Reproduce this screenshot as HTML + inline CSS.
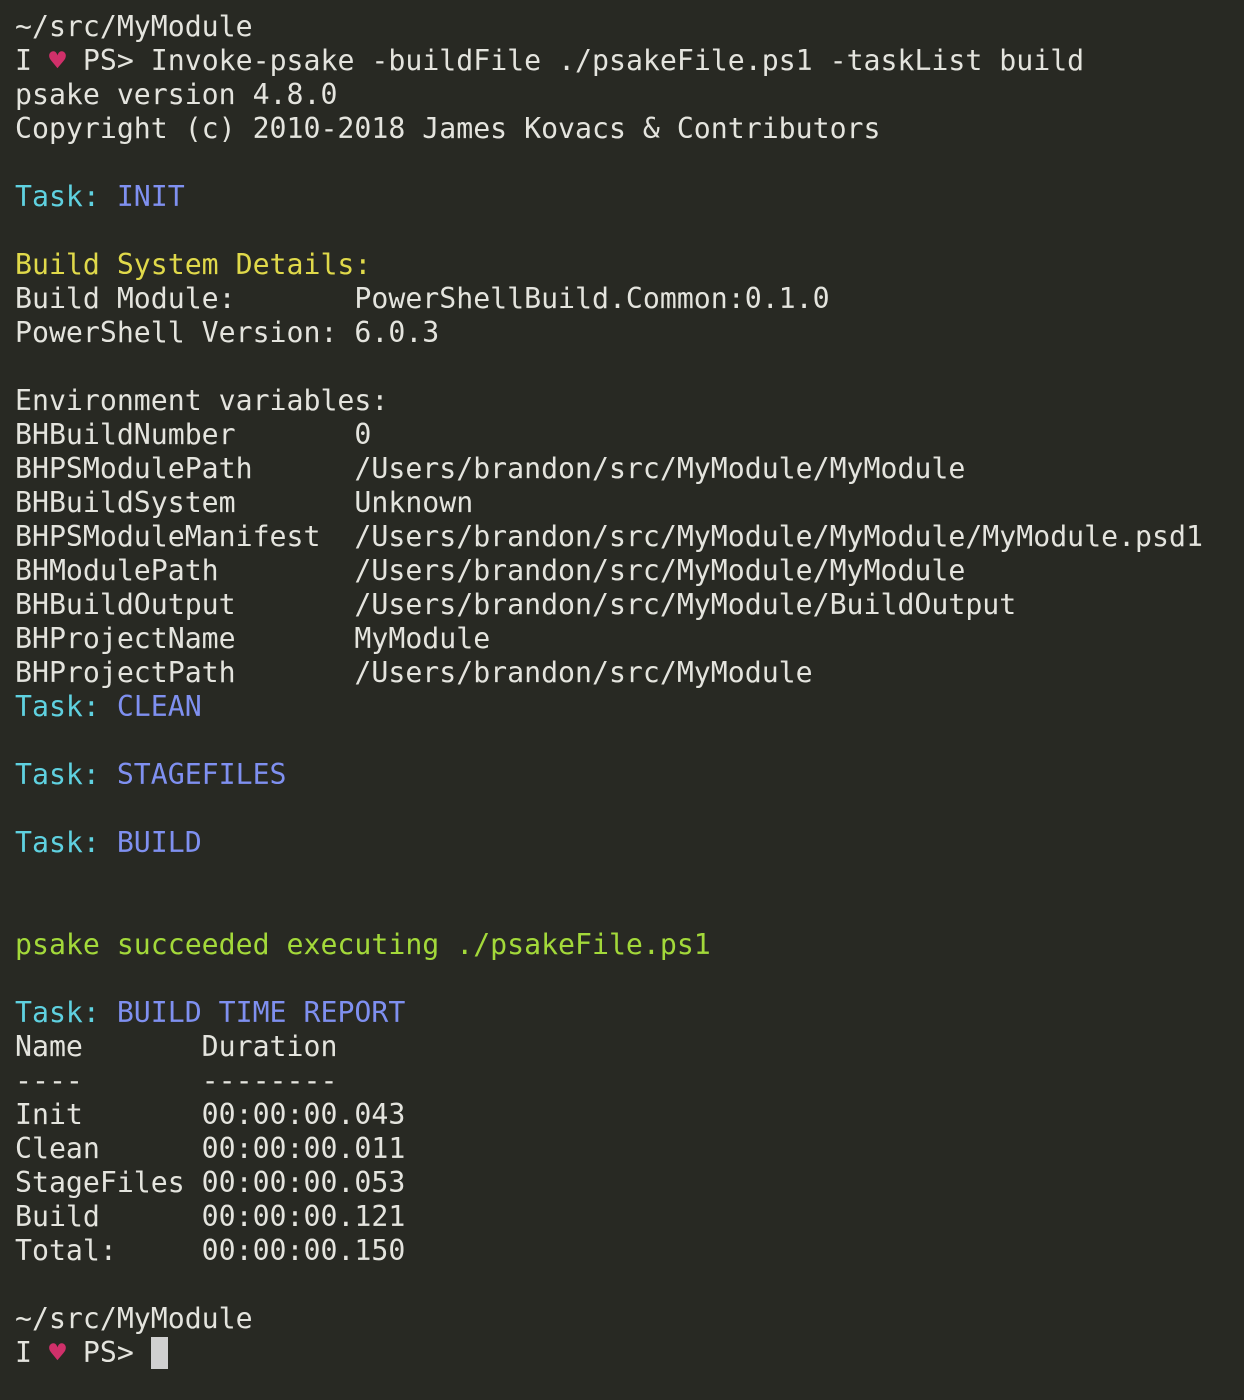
<!DOCTYPE html>
<html><head><meta charset="utf-8"><style>
html,body{margin:0;padding:0;background:#282923;width:1244px;height:1400px;overflow:hidden}
pre{margin:0;position:absolute;left:15px;top:10px;font-family:"DejaVu Sans Mono","Liberation Mono",monospace;font-size:28.2px;line-height:34px;color:#e4e4de;white-space:pre}
.c{color:#5fd1e0}.b{color:#7f90f0}.y{color:#e0d94a}.g{color:#a3d93a}.h{color:#d0306a}
.cur{display:inline-block;width:17px;height:32px;background:#d0d0d0;vertical-align:-7px}
</style></head><body><pre>~/src/MyModule
I <span class="h">♥</span> PS&gt; Invoke-psake -buildFile ./psakeFile.ps1 -taskList build
psake version 4.8.0
Copyright (c) 2010-2018 James Kovacs &amp; Contributors

<span class="c">Task: </span><span class="b">INIT</span>

<span class="y">Build System Details:</span>
Build Module:       PowerShellBuild.Common:0.1.0
PowerShell Version: 6.0.3

Environment variables:
BHBuildNumber       0
BHPSModulePath      /Users/brandon/src/MyModule/MyModule
BHBuildSystem       Unknown
BHPSModuleManifest  /Users/brandon/src/MyModule/MyModule/MyModule.psd1
BHModulePath        /Users/brandon/src/MyModule/MyModule
BHBuildOutput       /Users/brandon/src/MyModule/BuildOutput
BHProjectName       MyModule
BHProjectPath       /Users/brandon/src/MyModule
<span class="c">Task: </span><span class="b">CLEAN</span>

<span class="c">Task: </span><span class="b">STAGEFILES</span>

<span class="c">Task: </span><span class="b">BUILD</span>


<span class="g">psake succeeded executing ./psakeFile.ps1</span>

<span class="c">Task: </span><span class="b">BUILD TIME REPORT</span>
Name       Duration
----       --------
Init       00:00:00.043
Clean      00:00:00.011
StageFiles 00:00:00.053
Build      00:00:00.121
Total:     00:00:00.150

~/src/MyModule
I <span class="h">♥</span> PS&gt; <span class="cur"></span></pre></body></html>
